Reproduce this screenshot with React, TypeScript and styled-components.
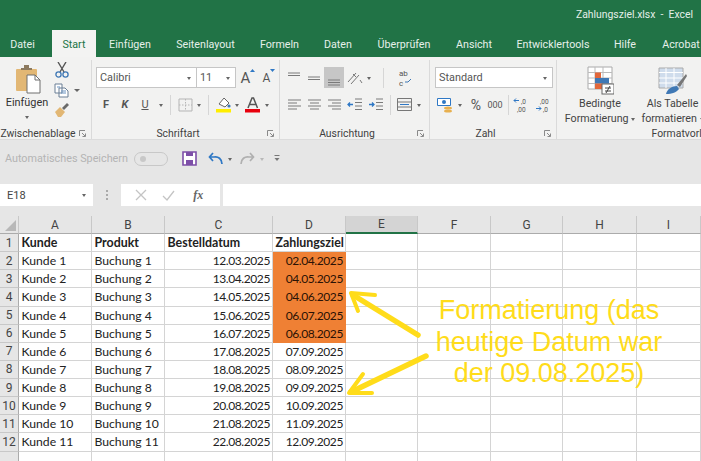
import React from "react";
import styled, { createGlobalStyle } from "styled-components";

const Global = createGlobalStyle`
  html, body { margin: 0; padding: 0; background: #fff; }
  * { box-sizing: border-box; }
`;
const UI = `Roboto, "Noto Sans", sans-serif`;

const Page = styled.div`
  position: relative; width: 701px; height: 461px; overflow: hidden;
  background: #fff; font-family: ${UI}; color: #444;
  display: flex; flex-direction: column;
`;
const TitleBar = styled.div`
  height: 30px; background: #217346; color: #e4efe9; font-size: 10.4px;
  display: flex; align-items: center; justify-content: flex-end; padding: 0 8px 2px 0; flex: none;
`;
const TabBar = styled.div`
  height: 27px; background: #217346; display: flex; flex: none; white-space: nowrap;
`;
const Tab = styled.div<{ $w: number; $active?: boolean; $after?: number }>`
  flex: none; width: ${p => p.$w}px; margin-right: ${p => p.$after ?? 0}px;
  display: flex; align-items: center; justify-content: center; font-size: 10.7px; padding-top: 2px;
  background: ${p => (p.$active ? "#f3f3f2" : "transparent")};
  color: ${p => (p.$active ? "#217346" : "#e6f0ea")};
`;
const Ribbon = styled.div`
  height: 83px; background: #f2f2f1; display: flex; flex: none; padding-top: 3px; border-bottom: 1px solid #dcdcdc;
`;
const Group = styled.div<{ $w: number; $plain?: boolean }>`
  flex: none; width: ${p => p.$w}px; display: flex; flex-direction: column;
  height: 79px; border-right: ${p => (p.$plain ? "none" : "1px solid #dadada")};
`;
const GroupBody = styled.div<{ $pl?: number }>`
  flex: 1; display: flex; min-height: 0; padding-left: ${p => p.$pl ?? 0}px;
`;
const GroupFoot = styled.div`
  height: 12px; display: flex; align-items: center; flex: none; font-size: 10.4px; color: #3f3f3f; white-space: nowrap;
`;
const FootLabel = styled.span`
  flex: 1; text-align: center;
`;
const Launcher = styled.svg`
  width: 7px; height: 7px; margin: 0 5px 0 3px; flex: none;
`;
const PasteCol = styled.div`
  width: 54px; display: flex; flex-direction: column; align-items: center; font-size: 10.9px; color: #333; padding-top: 3px; flex: none;
`;
const PasteIcon = styled.svg`
  margin: 2px 0 0 4px; flex: none;
`;
const PasteLabel = styled.span`
  line-height: 14px; margin-top: 2px;
`;
const ToolsCol = styled.div`
  display: flex; flex-direction: column; gap: 4.5px; padding-top: 2px;
`;
const Stack = styled.div<{ $pl: number }>`
  display: flex; flex-direction: column; gap: 6px; padding: 7px 0 0 ${p => p.$pl}px; flex: none;
`;
const ToolRow = styled.div`
  display: flex; align-items: center; height: 21px;
`;
const Combo = styled.div<{ $w: number }>`
  width: ${p => p.$w}px; height: 21px; background: #fff; border: 1px solid #c6c6c6; flex: none;
  display: flex; align-items: center; justify-content: space-between; padding: 0 5px 0 3px; font-size: 10.9px; color: #555;
  & + & { margin-left: -1px; }
`;
const Caret = styled.span<{ $ml?: number; $mr?: number; $c?: string }>`
  display: inline-block; flex: none; width: 0; height: 0; margin: 1px ${p => p.$mr ?? 0}px 0 ${p => p.$ml ?? 0}px;
  vertical-align: middle;
  border-left: 2.5px solid transparent; border-right: 2.5px solid transparent; border-top: 3px solid ${p => p.$c ?? "#666"};
`;
const PasteCaret = styled(Caret)`
  margin-top: 6px;
`;
const Glyph = styled.span<{ $w: number; $size?: number; $italic?: boolean; $under?: boolean; $bold?: boolean; $c?: string; $serif?: boolean; $ml?: number }>`
  flex: none; width: ${p => p.$w}px; text-align: center; line-height: 20px; margin-left: ${p => p.$ml ?? 0}px;
  font-size: ${p => p.$size ?? 11}px; font-style: ${p => (p.$italic ? "italic" : "normal")};
  font-weight: ${p => (p.$bold ? 700 : 400)}; text-decoration: ${p => (p.$under ? "underline" : "none")};
  color: ${p => p.$c ?? "#555"};
  font-family: ${p => (p.$serif ? `"Liberation Serif", serif` : "inherit")};
`;
const GrowFont = styled.span<{ $w: number; $size: number }>`
  flex: none; width: ${p => p.$w}px; display: flex; align-items: flex-start; justify-content: center;
  font-size: ${p => p.$size}px; color: #555; line-height: 20px;
`;
const VSep = styled.span<{ $mx: number }>`
  flex: none; width: 1px; height: 20px; background: #d6d6d6; margin: 0 ${p => p.$mx}px;
`;
const IconBtn = styled.span<{ $w: number; $on?: boolean }>`
  flex: none; width: ${p => p.$w}px; height: 21px; display: flex; align-items: center; justify-content: center;
  background: ${p => (p.$on ? "#c6c6c6" : "transparent")};
`;
const FreeIcon = styled.svg<{ $ml?: number }>`
  flex: none; margin-left: ${p => p.$ml ?? 0}px;
`;
const BigTool = styled.div<{ $w: number }>`
  width: ${p => p.$w}px; flex: none; display: flex; flex-direction: column; align-items: center;
  font-size: 10.7px; line-height: 14.5px; color: #444; padding-top: 6px; white-space: nowrap;
`;
const BigText = styled.span`
  margin-top: 2px; display: block; text-align: center;
`;
const Qat = styled.div`
  height: 37px; background: #e6e6e6; display: flex; align-items: center; padding: 0 0 0 5px; flex: none;
`;
const AutoSave = styled.span`
  font-size: 10.8px; color: #b4b4b4; width: 129px; flex: none; white-space: nowrap;
`;
const Toggle = styled.span`
  width: 34px; height: 14px; border: 1px solid #c8c8c8; border-radius: 7px; flex: none; position: relative; margin-right: 14px;
  &::after { content: ""; position: absolute; left: 5px; top: 3px; width: 6px; height: 6px; border-radius: 50%; background: #c8c8c8; }
`;
const FormulaBar = styled.div`
  height: 39px; background: #e6e6e6; display: flex; padding: 7px 0 10px; flex: none;
`;
const NameBox = styled.div`
  width: 93px; background: #fff; display: flex; align-items: center; justify-content: space-between;
  padding: 0 7px 0 7px; font-size: 11px; color: #444; flex: none;
`;
const Dots = styled.div`
  width: 28px; flex: none; display: flex; flex-direction: column; align-items: center; justify-content: center; gap: 2px;
  & > i { width: 2px; height: 2px; background: #aaa; display: block; }
`;
const FxBox = styled.div`
  width: 99px; background: #fff; display: flex; align-items: center; justify-content: space-around; padding: 0 6px; flex: none;
`;
const FormulaInput = styled.div`
  flex: 1; background: #fff; margin-left: 3px;
`;
const Grid = styled.div`
  flex: 1; display: grid; background: #fff;
  grid-template-columns: 19px 73px 73px 108px 73px 72px 73px 72px 74px 1fr;
  grid-template-rows: 18px repeat(13, 18.14px);
  font-family: Lato, "Liberation Sans", sans-serif; font-size: 12.2px; color: #222;
`;
const Corner = styled.div`
  background: #e6e6e6; border-right: 1px solid #c8c8c8; border-bottom: 1px solid #ababab; position: relative;
  &::after { content: ""; position: absolute; right: 2px; bottom: 2px; width: 0; height: 0;
    border-left: 11px solid transparent; border-bottom: 11px solid #b8b8b8; }
`;
const ColHead = styled.div<{ $sel?: boolean }>`
  background: ${p => (p.$sel ? "#d4d4d4" : "#e6e6e6")}; display: flex; align-items: center; justify-content: center;
  border-right: 1px solid #c8c8c8; border-bottom: ${p => (p.$sel ? "2px solid #217346" : "1px solid #ababab")};
  color: #444; font-size: 12px; font-family: ${UI};
`;
const RowHead = styled.div`
  background: #e6e6e6; display: flex; align-items: center; justify-content: center;
  border-right: 1px solid #ababab; border-bottom: 1px solid #c8c8c8; color: #444; font-size: 12px;
  font-family: ${UI};
`;
const Cell = styled.div<{ $right?: boolean; $bold?: boolean; $fill?: boolean }>`
  display: flex; align-items: center; padding: 0 2px 0 2.500px; white-space: nowrap; overflow: visible;
  justify-content: ${p => (p.$right ? "flex-end" : "flex-start")};
  font-weight: ${p => (p.$bold ? 700 : 400)};
  font-size: ${p => (p.$right ? "12px" : p.$bold ? "12.4px" : "inherit")};
  letter-spacing: ${p => (p.$right ? "-0.4px" : "normal")};
  background: ${p => (p.$fill ? "#ef8034" : "#fff")};
  border-right: 1px solid ${p => (p.$fill ? "#ef8034" : "#d4d4d4")};
  border-bottom: 1px solid ${p => (p.$fill ? "#ef8034" : "#d4d4d4")};
  color: ${p => (p.$fill ? "#2a1205" : "#222")};
`;
const Annotation = styled.div`
  position: absolute; left: 400px; top: 295px; width: 298px; text-align: center;
  font-family: "Liberation Sans", Arial, sans-serif; font-size: 27px; line-height: 31.5px;
  color: #ffdc1a; white-space: pre-line;
`;
const ArrowLayer = styled.svg`
  position: absolute; left: 0; top: 0; width: 701px; height: 461px; pointer-events: none;
`;

const Launch = () => (
  <Launcher viewBox="0 0 7 7"><path d="M.5 6V.5H6M3 3l3.200 3.200M6.500 3.500v3h-3" fill="none" stroke="#8a8a8a" strokeWidth="1" /></Launcher>
);
const Lines = ({ kind }: { kind: "top" | "mid" | "bot" | "left" | "center" | "right" }) => {
  if (kind === "top" || kind === "mid" || kind === "bot") {
    const y = kind === "top" ? 3 : kind === "mid" ? 7 : 10;
    return <svg width="14" height="16" viewBox="0 0 14 16"><path d={`M1 ${y}h12M1 ${y + 2.5}h12${kind === "bot" ? "M1 15h12" : ""}`} stroke="#7a7a7a" /></svg>;
  }
  const a = kind === "left" ? "M1 3h13M1 6h9M1 9h13M1 12h9" : kind === "center" ? "M1 3h13M3 6h9M1 9h13M3 12h9" : "M1 3h13M5 6h9M1 9h13M5 12h9";
  return <svg width="15" height="15" viewBox="0 0 15 15"><path d={a} stroke="#7a7a7a" /></svg>;
};
const dates = ["12.03.2025", "13.04.2025", "14.05.2025", "15.06.2025", "16.07.2025", "17.08.2025", "18.08.2025", "19.08.2025", "20.08.2025", "21.08.2025", "22.08.2025"];
const goals = ["02.04.2025", "04.05.2025", "04.06.2025", "06.07.2025", "06.08.2025", "07.09.2025", "08.09.2025", "09.09.2025", "10.09.2025", "11.09.2025", "12.09.2025"];
const cols = ["A", "B", "C", "D", "E", "F", "G", "H", "I"];

export default function App() {
  return (
    <Page>
      <Global />
      <TitleBar>Zahlungsziel.xlsx&nbsp; -&nbsp; Excel</TitleBar>
      <TabBar>
        <Tab $w={45} $after={7}>Datei</Tab>
        <Tab $w={44} $active>Start</Tab>
        <Tab $w={68}>Einfügen</Tab>
        <Tab $w={83}>Seitenlayout</Tab>
        <Tab $w={65}>Formeln</Tab>
        <Tab $w={52}>Daten</Tab>
        <Tab $w={80}>Überprüfen</Tab>
        <Tab $w={60}>Ansicht</Tab>
        <Tab $w={98}>Entwicklertools</Tab>
        <Tab $w={46}>Hilfe</Tab>
        <Tab $w={66}>Acrobat</Tab>
      </TabBar>
      <Ribbon>
        <Group $w={92}>
          <GroupBody>
            <PasteCol>
              <PasteIcon width="28" height="29" viewBox="0 0 28 29">
                <rect x="1" y="4" width="21" height="22" rx="1" fill="#e2b774" />
                <path d="M6 5V3h3V0h5v3h3v2z" fill="#8c7a5f" />
                <path d="M12 10h8l5 5v13H12z" fill="#fff" stroke="#6f6f6f" />
                <path d="M20 10v5h5" fill="none" stroke="#6f6f6f" />
              </PasteIcon>
              <PasteLabel>Einfügen</PasteLabel>
              <PasteCaret />
            </PasteCol>
            <ToolsCol>
              <svg width="16" height="16" viewBox="0 0 16 16">
                <path d="M4 0l6 10M12 0L6 10" stroke="#555" strokeWidth="1.4" />
                <circle cx="4.500" cy="12.500" r="2.600" fill="none" stroke="#3f78b5" strokeWidth="1.3" />
                <circle cx="11.500" cy="12.500" r="2.600" fill="none" stroke="#3f78b5" strokeWidth="1.3" />
              </svg>
              <svg width="26" height="15" viewBox="0 0 26 15">
                <path d="M1 1h7v9H1zM5 5h6l3 3v6H5z" fill="#fff" stroke="#6a7f95" />
                <path d="M7 8h5M7 10h5M3 4h3" stroke="#6a93c0" />
                <path d="M20 6h6l-3 3z" fill="#666" />
              </svg>
              <svg width="16" height="16" viewBox="0 0 16 16">
                <path d="M1 10l5-5 5 5-4 5H4z" fill="#e2b774" />
                <path d="M8 6l5-5 2 2-5 5z" fill="#6a6a6a" />
              </svg>
            </ToolsCol>
          </GroupBody>
          <GroupFoot><FootLabel>Zwischenablage</FootLabel><Launch /></GroupFoot>
        </Group>
        <Group $w={188}>
          <GroupBody>
            <Stack $pl={4}>
              <ToolRow>
                <Combo $w={101}>Calibri<Caret /></Combo>
                <Combo $w={40}>11<Caret /></Combo>
                <GrowFont $w={24} $size={15}>A<svg width="5" height="5" viewBox="0 0 5 5"><path d="M0 4l2.500-3L5 4z" fill="#2f78c5" /></svg></GrowFont>
                <GrowFont $w={18} $size={12}>A<svg width="5" height="5" viewBox="0 0 5 5"><path d="M0 1l2.500 3L5 1z" fill="#2f78c5" /></svg></GrowFont>
              </ToolRow>
              <ToolRow>
                <Glyph $w={20} $bold $size={11}>F</Glyph>
                <Glyph $w={18} $italic $bold $size={11}>K</Glyph>
                <Glyph $w={22} $under $size={11}>U</Glyph>
                <Caret $ml={3} />
                <VSep $mx={7} />
                <svg width="15" height="14" viewBox="0 0 15 14"><path d="M1 1h13v12H1z" fill="none" stroke="#b5b5b5" /><path d="M7.500 1v12M1 7h13" stroke="#b5b5b5" strokeDasharray="1.5 1.5" /></svg>
                <Caret $ml={4} />
                <VSep $mx={7} />
                <svg width="15" height="17" viewBox="0 0 15 17">
                  <path d="M3 8l5-6 5 5-4 4z" fill="#fff" stroke="#666" />
                  <rect x="0" y="13" width="15" height="3.500" fill="#ffee00" />
                  <circle cx="13" cy="10" r="1.600" fill="#3f78b5" />
                </svg>
                <Caret $ml={4} />
                <FreeIcon $ml={6} width="15" height="17" viewBox="0 0 15 17">
                  <path d="M3 12L7 2h1.500l4 10M5 8.500h5.500" fill="none" stroke="#555" strokeWidth="1.5" />
                  <rect x="0" y="13" width="15" height="3.500" fill="#e8000d" />
                </FreeIcon>
                <Caret $ml={5} />
              </ToolRow>
            </Stack>
          </GroupBody>
          <GroupFoot><FootLabel>Schriftart</FootLabel><Launch /></GroupFoot>
        </Group>
        <Group $w={150}>
          <GroupBody>
            <Stack $pl={4}>
              <ToolRow>
                <IconBtn $w={20}><Lines kind="top" /></IconBtn>
                <IconBtn $w={20}><Lines kind="mid" /></IconBtn>
                <IconBtn $w={20} $on><Lines kind="bot" /></IconBtn>
                <IconBtn $w={22}>
                  <svg width="16" height="14" viewBox="0 0 16 14"><path d="M1 11L9 2M4 13l8-9M6 3l3 3M13 9l2 3" stroke="#777" fill="none" /></svg>
                </IconBtn>
                <Caret $ml={1} />
                <VSep $mx={12} />
                <IconBtn $w={18}>
                  <svg width="14" height="18" viewBox="0 0 14 18">
                    <text x="1" y="7" fontSize="8" fill="#555" fontFamily="Roboto">ab</text>
                    <text x="1" y="16.500" fontSize="8" fill="#555" fontFamily="Roboto">c</text>
                    <path d="M7 13h3l3-3" stroke="#3f78b5" fill="none" />
                  </svg>
                </IconBtn>
              </ToolRow>
              <ToolRow>
                <IconBtn $w={20}><Lines kind="left" /></IconBtn>
                <IconBtn $w={20}><Lines kind="center" /></IconBtn>
                <IconBtn $w={20}><Lines kind="right" /></IconBtn>
                <IconBtn $w={21}>
                  <svg width="15" height="13" viewBox="0 0 15 13"><path d="M8 1h7M8 4.500h7M8 8h7M8 11.500h7" stroke="#7a7a7a" /><path d="M6 6.500H1M3 4.500l-2 2 2 2" stroke="#2f78c5" fill="none" strokeWidth="1.3" /></svg>
                </IconBtn>
                <IconBtn $w={21}>
                  <svg width="15" height="13" viewBox="0 0 15 13"><path d="M8 1h7M8 4.500h7M8 8h7M8 11.500h7" stroke="#7a7a7a" /><path d="M1 6.500h5M4 4.500l2 2-2 2" stroke="#2f78c5" fill="none" strokeWidth="1.3" /></svg>
                </IconBtn>
                <VSep $mx={4} />
                <IconBtn $w={18}>
                  <svg width="15" height="13" viewBox="0 0 15 13"><path d="M.5.500h14v12H.5zM.5 4h14M.5 9h14" fill="none" stroke="#777" /><path d="M3 6.500h9" stroke="#2f78c5" /></svg>
                </IconBtn>
                <Caret $ml={4} />
              </ToolRow>
            </Stack>
          </GroupBody>
          <GroupFoot><FootLabel>Ausrichtung</FootLabel><Launch /></GroupFoot>
        </Group>
        <Group $w={127}>
          <GroupBody>
            <Stack $pl={5}>
              <ToolRow><Combo $w={118}>Standard<Caret /></Combo></ToolRow>
              <ToolRow>
                <FreeIcon $ml={2} width="18" height="16" viewBox="0 0 18 16">
                  <path d="M.5 1.500h13v7H.5z" fill="#fff" stroke="#2f78c5" />
                  <circle cx="7" cy="5" r="2" fill="#2f78c5" />
                  <ellipse cx="11" cy="11" rx="4" ry="1.600" fill="#e8b04f" />
                  <ellipse cx="11" cy="14" rx="4" ry="1.600" fill="#e8b04f" />
                </FreeIcon>
                <Caret $ml={3} />
                <Glyph $ml={4} $w={20} $size={14}>%</Glyph>
                <Glyph $w={18} $size={9}>000</Glyph>
                <VSep $mx={3.5} />
                <svg width="22" height="16" viewBox="0 0 22 16">
                  <path d="M2 3.500h5M4 1.500l-2 2 2 2" stroke="#2f78c5" fill="none" />
                  <text x="9" y="6.500" fontSize="6.500" fill="#555" fontFamily="Roboto">,0</text>
                  <text x="5" y="15" fontSize="6.500" fill="#555" fontFamily="Roboto">,00</text>
                </svg>
                <svg width="21" height="16" viewBox="0 0 21 16">
                  <path d="M2 11.500h5M5 9.500l2 2-2 2" stroke="#2f78c5" fill="none" />
                  <text x="6" y="6.500" fontSize="6.500" fill="#555" fontFamily="Roboto">,00</text>
                  <text x="9" y="15" fontSize="6.500" fill="#555" fontFamily="Roboto">,0</text>
                </svg>
              </ToolRow>
            </Stack>
          </GroupBody>
          <GroupFoot><FootLabel>Zahl</FootLabel><Launch /></GroupFoot>
        </Group>
        <Group $w={262} $plain>
          <GroupBody $pl={5}>
            <BigTool $w={76}>
              <svg width="27" height="29" viewBox="0 0 27 29">
                <path d="M1 1h24v22H1z" fill="#fff" stroke="#aaa" />
                <path d="M8 1v22M16 1v22M1 6.500h24M1 12h24M1 17.500h24" stroke="#bbb" />
                <rect x="8" y="6.500" width="6" height="5.500" fill="#e2673a" />
                <rect x="8" y="12" width="14" height="5.500" fill="#3f78b5" />
                <rect x="8" y="17.500" width="8" height="5.500" fill="#e2673a" />
                <rect x="15" y="18" width="12" height="10" fill="#fff" stroke="#666" />
                <path d="M18 22h6M18 25h6M23 20l-4 7" stroke="#444" />
              </svg>
              <BigText>Bedingte<br />Formatierung <Caret /></BigText>
            </BigTool>
            <BigTool $w={69}>
              <svg width="30" height="29" viewBox="0 0 30 29">
                <path d="M1 2h24v20H1z" fill="#cfdcec" stroke="#aaa" />
                <path d="M1 6.500h24M1 12h24M1 17h24M8 2v20M16 2v20" stroke="#fff" />
                <path d="M19 19l9-11 1 2-7 11z" fill="#777" />
                <path d="M8 28c1-5 6-8 11-8l2 3c-2 3-7 5-13 5z" fill="#3f78b5" />
              </svg>
              <BigText>Als Tabelle<br />formatieren <Caret /></BigText>
            </BigTool>
          </GroupBody>
          <GroupFoot><FootLabel>Formatvorlagen</FootLabel></GroupFoot>
        </Group>
      </Ribbon>
      <Qat>
        <AutoSave>Automatisches Speichern</AutoSave>
        <Toggle />
        <svg width="15" height="15" viewBox="0 0 15 15">
          <path d="M1 1h13v13H1z" fill="#fff" stroke="#7d4fa8" strokeWidth="1.6" />
          <path d="M4 1h7v4H4zM4 9h7v5H4z" fill="#7d4fa8" />
        </svg>
        <FreeIcon $ml={11} width="15" height="13" viewBox="0 0 15 13">
          <path d="M14 12c0-5-4-8-8-7H2M5 1L1.500 5 5 9" fill="none" stroke="#2f78c5" strokeWidth="1.7" />
        </FreeIcon>
        <Caret $ml={5} />
        <FreeIcon $ml={8} width="15" height="13" viewBox="0 0 15 13">
          <path d="M1 12c0-5 4-8 8-7h4M10 1l3.500 4L10 9" fill="none" stroke="#b0b0b0" strokeWidth="1.7" />
        </FreeIcon>
        <Caret $ml={5} $c="#b8b8b8" />
        <FreeIcon $ml={10} width="6" height="7" viewBox="0 0 6 7">
          <path d="M.5.500h5" stroke="#777" />
          <path d="M.5 3h5L3 6z" fill="#777" />
        </FreeIcon>
      </Qat>
      <FormulaBar>
        <NameBox>E18<Caret /></NameBox>
        <Dots><i /><i /><i /></Dots>
        <FxBox>
          <svg width="12" height="12" viewBox="0 0 12 12"><path d="M1 1l10 10M11 1L1 11" stroke="#c4c4c4" strokeWidth="1.3" /></svg>
          <svg width="13" height="11" viewBox="0 0 13 11"><path d="M1 6l4 4 7-9" stroke="#c4c4c4" fill="none" strokeWidth="1.3" /></svg>
          <Glyph $w={16} $italic $serif $size={12} $bold $c="#666">fx</Glyph>
        </FxBox>
        <FormulaInput />
      </FormulaBar>
      <Grid>
        <Corner />
        {cols.map(c => <ColHead key={c} $sel={c === "E"}>{c}</ColHead>)}
        <RowHead>1</RowHead>
        <Cell $bold>Kunde</Cell>
        <Cell $bold>Produkt</Cell>
        <Cell $bold>Bestelldatum</Cell>
        <Cell $bold>Zahlungsziel</Cell>
        {Array.from({ length: 5 }, (_, i) => <Cell key={i} />)}
        {dates.map((d, i) => (
          <React.Fragment key={d}>
            <RowHead>{i + 2}</RowHead>
            <Cell>Kunde {i + 1}</Cell>
            <Cell>Buchung {i + 1}</Cell>
            <Cell $right>{d}</Cell>
            <Cell $right $fill={i < 5}>{goals[i]}</Cell>
            {Array.from({ length: 5 }, (_, k) => <Cell key={k} />)}
          </React.Fragment>
        ))}
        <RowHead />
        {Array.from({ length: 9 }, (_, k) => <Cell key={k} />)}
      </Grid>
      <ArrowLayer viewBox="0 0 701 461">
        <g fill="none" stroke="#ffdc1a" strokeLinecap="round" strokeLinejoin="round">
          <path d="M418 335L353 295" strokeWidth="5.500" />
          <path d="M375 295L351 293L358 311" strokeWidth="4" />
          <path d="M426 356L351 392" strokeWidth="5.500" />
          <path d="M363 374L349 393L372 393" strokeWidth="4" />
        </g>
      </ArrowLayer>
      <Annotation>{"Formatierung (das\nheutige Datum war\nder 09.08.2025)"}</Annotation>
    </Page>
  );
}
